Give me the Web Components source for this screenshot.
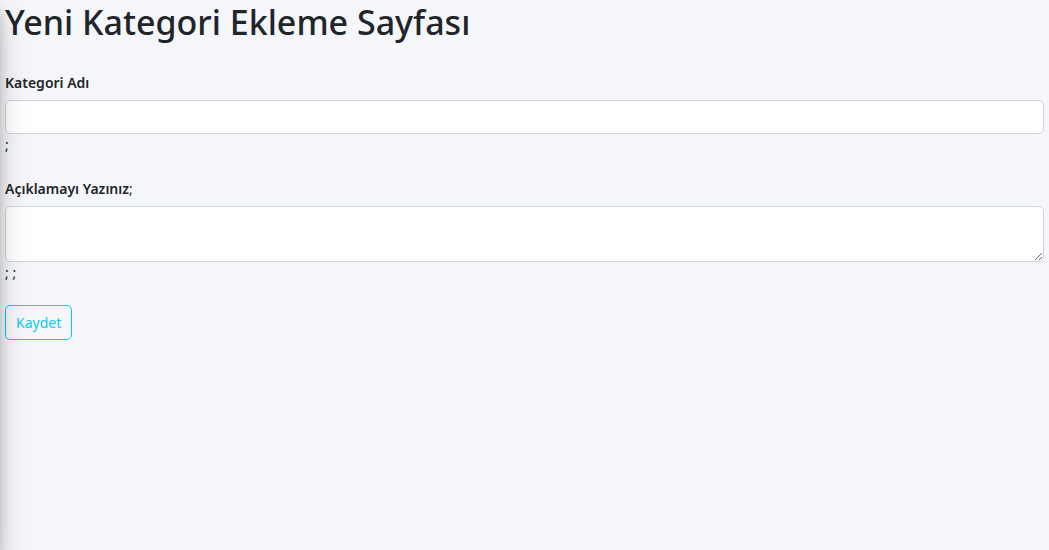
<!DOCTYPE html>
<html lang="tr">
<head>
<meta charset="utf-8">
<title>Yeni Kategori Ekleme Sayfası</title>
<style>
  body { margin: 0; min-height: 100vh; background: #f4f6fa; color: #212529; font: 14px/21px "Noto Sans", sans-serif; }
</style>
</head>
<body>
<category-page></category-page>
<script>
const attach = (host, html) => {
  host.attachShadow({ mode: "open" }).innerHTML = html;
};

customElements.define("side-drawer", class extends HTMLElement {
  constructor() {
    super();
    attach(this, `
      <style>
        :host {
          position: fixed; top: 0; bottom: 0; right: 100%; width: 250px;
          box-shadow: 0 14px 28px rgba(0,0,0,.2), 0 10px 10px rgba(0,0,0,.16);
          pointer-events: none; z-index: 10;
        }
      </style>`);
  }
});

customElements.define("form-field", class extends HTMLElement {
  constructor() {
    super();
    const control = this.hasAttribute("multiline")
      ? `<textarea id="control"></textarea>`
      : `<input id="control" type="text">`;
    attach(this, `
      <style>
        * { box-sizing: border-box; }
        :host { display: block; }
        .caption { margin-bottom: 7px; }
        label { font-weight: 600; }
        input, textarea {
          display: block; width: 100%; margin: 0; padding: 5px 10px;
          border: 1px solid #ced4da; border-radius: 5px; background: #fff;
          color: inherit; font: inherit;
        }
        input { height: 34px; }
        textarea { height: 56px; resize: vertical; }
      </style>
      <div class="caption"><label for="control">${this.getAttribute("label")}</label><slot name="after-label"></slot></div>
      ${control}
      <div><slot></slot></div>`);
  }
});

customElements.define("save-button", class extends HTMLElement {
  constructor() {
    super();
    attach(this, `
      <style>
        :host { display: block; }
        button {
          display: block; padding: 6px 10px; border: 1px solid #0dcaf0; border-radius: 5px;
          background: transparent; color: #0dcaf0; font: inherit; cursor: pointer;
        }
        button:hover { background: #0dcaf0; color: #000; }
      </style>
      <button type="submit"><slot></slot></button>`);
  }
});

customElements.define("category-page", class extends HTMLElement {
  constructor() {
    super();
    attach(this, `
      <style>
        :host { display: block; padding: 0 5px; }
        h1 { margin: 0 0 28px; font-size: 34px; line-height: 44px; font-weight: 500; }
        form { margin: 0; }
        .fields { display: grid; gap: 23px; margin-bottom: 22px; }
      </style>
      <side-drawer></side-drawer>
      <h1>Yeni Kategori Ekleme Sayfası</h1>
      <form>
        <div class="fields">
          <form-field label="Kategori Adı">;</form-field>
          <form-field label="Açıklamayı Yazınız" multiline><span slot="after-label">;</span>; ;</form-field>
        </div>
        <save-button>Kaydet</save-button>
      </form>`);
  }
});
</script>
</body>
</html>
